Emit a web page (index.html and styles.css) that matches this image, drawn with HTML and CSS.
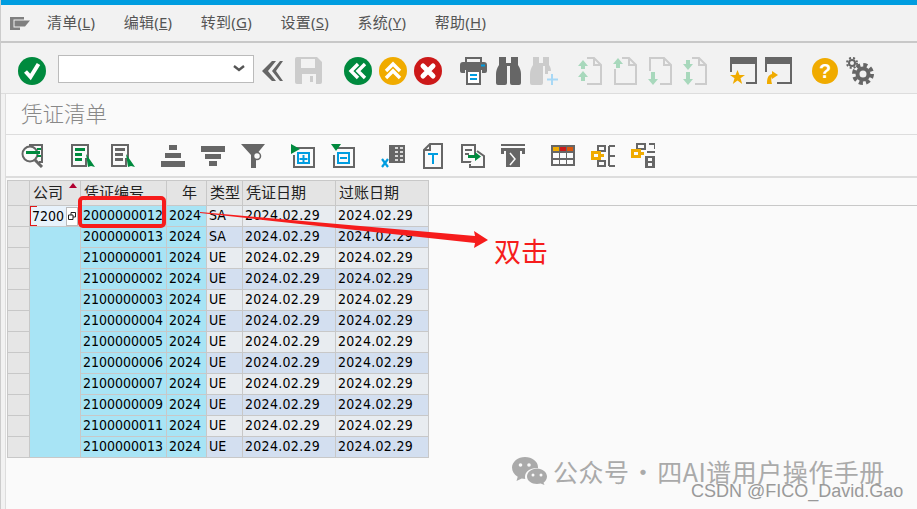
FILE: index.html
```html
<!DOCTYPE html>
<html lang="zh-CN">
<head>
    <meta charset="UTF-8">
    <title>凭证清单</title>
    <link rel="stylesheet" href="styles.css">
</head>
<body>
    <div class="topbar"></div>

    <!-- Menu -->
    <div class="menubar">
        <svg class="menu-icon" width="20" height="13" viewBox="0 0 20 13"><path d="M0 0h14v2.500H3.500v8H10V13H0z" fill="#808080"/><path d="M4.500 3.500H20l-5 6H4.500z" fill="#808080"/></svg>
        <span class="menu-item">清单(<u>L</u>)</span>
        <span class="menu-item">编辑(<u>E</u>)</span>
        <span class="menu-item">转到(<u>G</u>)</span>
        <span class="menu-item">设置(<u>S</u>)</span>
        <span class="menu-item">系统(<u>Y</u>)</span>
        <span class="menu-item">帮助(<u>H</u>)</span>
    </div>

    <!-- System toolbar -->
    <div class="systembar">
        <div class="group">
            <span class="tool"><svg width="28" height="28" viewBox="0 0 28 28"><circle cx="14" cy="14" r="14" fill="#008a3e"/><path d="M7.500 14.500l5 5.500 8-13" fill="none" stroke="#fff" stroke-width="4"/></svg></span>
        </div>
        <div class="combo"><svg width="12" height="7" viewBox="0 0 12 7"><path d="M1 1l5 4 5-4" fill="none" stroke="#555" stroke-width="2.400"/></svg></div>
        <div class="group group-tight">
            <span class="tool"><svg width="24" height="22" viewBox="2 0 24 22"><path d="M12 1L2 11l10 10h4L8 11l8-10zM20 1l-8 10 8 10h3l-7-10 7-10z" fill="#666"/></svg></span>
            <span class="tool"><svg width="27" height="27" viewBox="0 0 27 27"><path d="M2 0h20l5 5v20a2 2 0 0 1-2 2H2a2 2 0 0 1-2-2V2a2 2 0 0 1 2-2z" fill="#ccc"/><path d="M6 2h14v9H6z" fill="#f2f2f2"/><path d="M7 17h14v10H7z" fill="#f2f2f2"/><path d="M15 19h3v6h-3z" fill="#ccc"/></svg></span>
        </div>
        <div class="group group-wide">
            <span class="tool"><svg width="28" height="28" viewBox="0 0 28 28"><circle cx="14" cy="14" r="14" fill="#008a3e"/><path d="M14 7l-7 7 7 7M21 7l-7 7 7 7" fill="none" stroke="#fff" stroke-width="3.400"/></svg></span>
            <span class="tool"><svg width="28" height="28" viewBox="0 0 28 28"><circle cx="14" cy="14" r="14" fill="#f0ab00"/><path d="M7 14l7-7 7 7M7 21l7-7 7 7" fill="none" stroke="#fff" stroke-width="3.400"/></svg></span>
            <span class="tool"><svg width="28" height="28" viewBox="0 0 28 28"><circle cx="14" cy="14" r="14" fill="#cc1919"/><path d="M9 9l10 10M19 9L9 19" fill="none" stroke="#fff" stroke-width="5" stroke-linecap="round"/></svg></span>
        </div>
        <div class="group">
            <span class="tool"><svg width="27" height="28" viewBox="0 0 27 28"><path d="M6 5V1h15v4" fill="none" stroke="#666" stroke-width="2"/><path d="M3 5h21a3 3 0 0 1 3 3v6a2 2 0 0 1-2 2h-3v-3H5v3H2a2 2 0 0 1-2-2V8a3 3 0 0 1 3-3z" fill="#666"/><path d="M21 7.500h4v2h-4z" fill="#009de0"/><path d="M7 14h13v13H7z" fill="#fff" stroke="#666" stroke-width="2"/><path d="M10 17h7v2h-7zM10 21h7v2h-7z" fill="#009de0"/></svg></span>
            <span class="tool"><svg width="25" height="28" viewBox="0 0 25 28"><path d="M3 0h7v6h5V0h7v8c2 3 3 6 3 9v9a2 2 0 0 1-2 2h-7a2 2 0 0 1-2-2V9h-3v17a2 2 0 0 1-2 2H2a2 2 0 0 1-2-2v-9c0-3 1-6 3-9z" fill="#666"/></svg></span>
            <span class="tool"><svg width="28" height="28" viewBox="0 0 28 28"><path d="M3 0h6v6h4V0h6v8c1.500 2 2 4 2 6h-3v3h-3V9h-2v17a2 2 0 0 1-2 2H2a2 2 0 0 1-2-2v-9c0-3 1-6 3-9z" fill="#ccc"/><path d="M22 17v11M17 22.500h11" stroke="#a8d8f5" stroke-width="2"/></svg></span>
        </div>
        <div class="group">
            <span class="tool"><svg width="24" height="28" viewBox="0 0 24 28"><path d="M9 1h7l7 7v19H9" fill="none" stroke="#ccc" stroke-width="2"/><path d="M16 1v7h7" fill="none" stroke="#ccc" stroke-width="2"/><path d="M5 3l5 6H7v3H3V9H0zM5 14l5 6H7v4H3v-4H0z" fill="#a8d8bc"/></svg></span>
            <span class="tool"><svg width="24" height="28" viewBox="0 0 24 28"><path d="M9 1h7l7 7v19H2V12" fill="none" stroke="#ccc" stroke-width="2"/><path d="M16 1v7h7" fill="none" stroke="#ccc" stroke-width="2"/><path d="M5 1l5 6H7v4H3V7H0z" fill="#a8d8bc"/></svg></span>
            <span class="tool"><svg width="24" height="28" viewBox="0 0 24 28"><path d="M2 14V1h14l7 7v19H12" fill="none" stroke="#ccc" stroke-width="2"/><path d="M16 1v7h7" fill="none" stroke="#ccc" stroke-width="2"/><path d="M3 15h4v7h3l-5 6-5-6h3z" fill="#a8d8bc"/></svg></span>
            <span class="tool"><svg width="24" height="28" viewBox="0 0 24 28"><path d="M9 1h7l7 7v19H12" fill="none" stroke="#ccc" stroke-width="2"/><path d="M16 1v7h7" fill="none" stroke="#ccc" stroke-width="2"/><path d="M3 3h4v4h3l-5 6-5-6h3zM3 15h4v7h3l-5 6-5-6h3z" fill="#a8d8bc"/></svg></span>
        </div>
        <div class="group group-wide">
            <span class="tool"><svg width="27" height="27" viewBox="0 0 27 27"><path d="M0 0h27v27H16v-2h9V7H2v8H0z" fill="#666"/><path d="M7.500 13l2 5h5.500l-4.500 3.300 1.700 5.700-4.700-3.500L2.800 27l1.700-5.700L0 18h5.500z" fill="#f0ab00"/></svg></span>
            <span class="tool"><svg width="27" height="27" viewBox="0 0 27 27"><path d="M0 0h27v27H12v-2h13V7H2v8H0z" fill="#666"/><path d="M2 27c0-6 1-9 5-10v-3l6 4-6 4v-2c-1 1-1 4 0 7z" fill="#f0ab00"/></svg></span>
        </div>
        <div class="group">
            <span class="tool"><svg width="26" height="26" viewBox="0 0 26 26"><circle cx="13" cy="13" r="13" fill="#f0ab00"/><text x="13" y="20" class="help-mark">?</text></svg></span>
            <span class="tool"><svg width="28" height="28" viewBox="0 0 28 28"><circle cx="6" cy="6" r="3" fill="none" stroke="#666" stroke-width="2"/><circle cx="6" cy="6" r="5" fill="none" stroke="#666" stroke-width="2" stroke-dasharray="2 2"/><circle cx="17" cy="17" r="5.500" fill="none" stroke="#666" stroke-width="4"/><circle cx="17" cy="17" r="9" fill="none" stroke="#666" stroke-width="4" stroke-dasharray="4 3.070"/></svg></span>
        </div>
    </div>

    <div class="content">
        <div class="title">凭证清单</div>

        <!-- Application toolbar -->
        <div class="appbar">
            <div class="group">
                <span class="tool-app"><svg width="24" height="24" viewBox="0 0 24 24"><path d="M8 1h13v17h-3" fill="none" stroke="#666" stroke-width="2"/><circle cx="9" cy="10" r="7.500" fill="#fafafa" stroke="#666" stroke-width="2"/><path d="M14 16l7 7" stroke="#666" stroke-width="3"/><path d="M5 7h14v3H5z" fill="#008a3e"/><path d="M16 11h4v2h-4zM16 4h4v2h-4z" fill="#008a3e"/></svg></span>
            </div>
            <div class="group">
                <span class="tool-app"><svg width="24" height="24" viewBox="0 0 24 24"><path d="M1 1h16v14h-2v7H1z" fill="#fafafa" stroke="#666" stroke-width="2"/><path d="M4 4h10v3H4zM4 9h7v3H4zM4 14h7v3H4z" fill="#008a3e"/><path d="M15 10l9 13-4-1-3 1z" fill="#008a3e"/></svg></span>
                <span class="tool-app"><svg width="24" height="24" viewBox="0 0 24 24"><path d="M1 1h16v14h-2v7H1z" fill="#fafafa" stroke="#666" stroke-width="2"/><path d="M4 4h10v3H4zM4 9h8v3H4zM4 14h8v3H4z" fill="#666"/><path d="M15 10l9 13-4-1-3 1z" fill="#008a3e"/></svg></span>
            </div>
            <div class="group">
                <span class="tool-app"><svg width="24" height="22" viewBox="0 0 24 22"><path d="M8 0h8v5H8zM4 8h16v5H4zM0 16h24v6H0z" fill="#666"/></svg></span>
                <span class="tool-app"><svg width="24" height="20" viewBox="0 0 24 20"><path d="M0 0h24v6H0zM4 8h16v5H4zM8 15h8v5H8z" fill="#666"/></svg></span>
                <span class="tool-app"><svg width="24" height="24" viewBox="0 0 24 24"><path d="M0 0h24l-9 11v13h-5V11z" fill="#666"/><circle cx="16" cy="12" r="3.500" fill="#fafafa" stroke="#666" stroke-width="1.500"/></svg></span>
            </div>
            <div class="group">
                <span class="tool-app"><svg width="24" height="24" viewBox="0 0 24 24"><path d="M4 4h19v19H3V11" fill="#fafafa" stroke="#666" stroke-width="2"/><path d="M7 9h11v10H7z" fill="none" stroke="#009de0" stroke-width="2"/><path d="M11.500 11h2v3h3v2h-3v3h-2v-3h-3v-2h3z" fill="#009de0"/><path d="M0 0l9 5-9 5z" fill="#008a3e"/></svg></span>
                <span class="tool-app"><svg width="24" height="24" viewBox="0 0 24 24"><path d="M4 4h19v19H3V11" fill="#fafafa" stroke="#666" stroke-width="2"/><path d="M7 9h11v10H7z" fill="none" stroke="#009de0" stroke-width="2"/><path d="M9 13h7v2H9z" fill="#009de0"/><path d="M0 0h10L5 7z" fill="#008a3e"/></svg></span>
            </div>
            <div class="group">
                <span class="tool-app"><svg width="24" height="24" viewBox="0 0 24 24"><path d="M8 1h16v18H8z" fill="#666"/><path d="M14 3h3v2h-3zM19 3h3v2h-3zM14 7h3v2h-3zM19 7h3v2h-3zM14 11h3v2h-3zM19 11h3v2h-3zM14 15h3v2h-3zM19 15h3v2h-3z" fill="#d8d8d8"/><path d="M1 15l6 8M7 15l-6 8" stroke="#009de0" stroke-width="2.200"/></svg></span>
                <span class="tool-app"><svg width="20" height="26" viewBox="0 0 20 26"><path d="M7 1h12v24H1V7zM7 1v6H1" fill="#fafafa" stroke="#666" stroke-width="2"/><path d="M5 10h10v2H11v9H9v-9H5z" fill="#009de0"/></svg></span>
                <span class="tool-app"><svg width="24" height="24" viewBox="0 0 24 24"><path d="M1 1h13v17H1z" fill="#fafafa" stroke="#666" stroke-width="2"/><path d="M4 5h7v2H4zM4 9h4v2H4z" fill="#666"/><path d="M16 7l7 5v11H9v-3" fill="#fafafa" stroke="#666" stroke-width="2"/><path d="M7 11h7V8l6 4.500-6 4.500v-3H7z" fill="#008a3e"/></svg></span>
                <span class="tool-app"><svg width="24" height="23" viewBox="0 0 24 23"><path d="M0 0h24v2H0zM0 4h24v6h-3V7H3v3H0z" fill="#666"/><path d="M5 7h14v16H5z" fill="#666"/><path d="M9 9l5 6-5 6" fill="none" stroke="#fafafa" stroke-width="1.500"/></svg></span>
            </div>
            <div class="group">
                <span class="tool-app"><svg width="24" height="21" viewBox="0 0 24 21"><path d="M0 0h24v21H0z" fill="#666"/><path d="M2 2h6v4H2z" fill="#f0ab00"/><path d="M9 2h6v4H9z" fill="#cc1919"/><path d="M16 2h6v4h-6z" fill="#d9560e"/><path d="M2 8h6v5H2zM9 8h6v5H9zM16 8h6v5h-6zM2 15h6v4H2zM9 15h6v4H9zM16 15h6v4h-6z" fill="#fafafa"/></svg></span>
                <span class="tool-app"><svg width="24" height="22" viewBox="0 0 24 22"><path d="M7 1h7v5H7zM18 1h6M18 1v20M18 11h6M18 21h6M7 16h7v5H7z" fill="none" stroke="#666" stroke-width="2"/><path d="M0 6h10v3h3v3h-3v3H0z" fill="#f0ab00"/><path d="M3 9h4v3H3z" fill="#fafafa"/></svg></span>
                <span class="tool-app"><svg width="24" height="25" viewBox="0 0 24 25"><path d="M6 1h8v5H6zM18 1h6v5M16 9h8" fill="none" stroke="#666" stroke-width="2"/><path d="M14 13h10v12H14z" fill="#666"/><path d="M17 15h4v3h-4zM17 20h4v3h-4z" fill="#fafafa"/><path d="M0 6h10v3h3v3h-3v3H0z" fill="#f0ab00"/><path d="M3 9h4v3H3z" fill="#fafafa"/></svg></span>
            </div>
        </div>

        <!-- Document list -->
        <table class="grid">
            <colgroup>
                <col class="col-select"><col class="col-company"><col class="col-doc"><col class="col-year"><col class="col-type"><col class="col-date"><col class="col-date"><col>
            </colgroup>
            <tr>
                <th></th>
                <th class="sorted">公司</th>
                <th>凭证编号</th>
                <th class="year-head">年</th>
                <th>类型</th>
                <th>凭证日期</th>
                <th>过账日期</th>
                <th class="rest"></th>
            </tr>
            <tr>
                <td class="select"></td>
                <td class="focus"><div class="focus-inner">7200<span class="f4"><svg width="8" height="8" viewBox="0 0 8 8"><path d="M.5 3h4.500v4.500H.5zM3 3V.5h4.500V5H5" fill="none" stroke="#222"/></svg></span></div></td>
                <td class="key">2000000012</td><td class="key">2024</td><td>SA</td><td>2024.02.29</td><td>2024.02.29</td>
            </tr>
            <tr class="alt">
                <td class="select"></td>
                <td class="key" rowspan="11"></td>
                <td class="key">2000000013</td><td class="key">2024</td><td>SA</td><td>2024.02.29</td><td>2024.02.29</td>
            </tr>
            <tr><td class="select"></td><td class="key">2100000001</td><td class="key">2024</td><td>UE</td><td>2024.02.29</td><td>2024.02.29</td></tr>
            <tr class="alt"><td class="select"></td><td class="key">2100000002</td><td class="key">2024</td><td>UE</td><td>2024.02.29</td><td>2024.02.29</td></tr>
            <tr><td class="select"></td><td class="key">2100000003</td><td class="key">2024</td><td>UE</td><td>2024.02.29</td><td>2024.02.29</td></tr>
            <tr class="alt"><td class="select"></td><td class="key">2100000004</td><td class="key">2024</td><td>UE</td><td>2024.02.29</td><td>2024.02.29</td></tr>
            <tr><td class="select"></td><td class="key">2100000005</td><td class="key">2024</td><td>UE</td><td>2024.02.29</td><td>2024.02.29</td></tr>
            <tr class="alt"><td class="select"></td><td class="key">2100000006</td><td class="key">2024</td><td>UE</td><td>2024.02.29</td><td>2024.02.29</td></tr>
            <tr><td class="select"></td><td class="key">2100000007</td><td class="key">2024</td><td>UE</td><td>2024.02.29</td><td>2024.02.29</td></tr>
            <tr class="alt"><td class="select"></td><td class="key">2100000009</td><td class="key">2024</td><td>UE</td><td>2024.02.29</td><td>2024.02.29</td></tr>
            <tr><td class="select"></td><td class="key">2100000011</td><td class="key">2024</td><td>UE</td><td>2024.02.29</td><td>2024.02.29</td></tr>
            <tr class="alt"><td class="select"></td><td class="key">2100000013</td><td class="key">2024</td><td>UE</td><td>2024.02.29</td><td>2024.02.29</td></tr>
        </table>
    </div>

    <!-- Annotation drawn over the screenshot -->
    <svg class="markup" width="917" height="509" viewBox="0 0 917 509">
        <rect x="80" y="198" width="84" height="28" rx="3" fill="none" stroke="#f61c1c" stroke-width="4"/>
        <path d="M200 212L475 236l-1-5 14 9-14 8 1-5L200 213z" fill="#f61c1c"/>
    </svg>
    <div class="note">双击</div>

    <!-- Watermarks -->
    <div class="watermark">
        <svg width="35" height="28" viewBox="0 0 35 28"><path d="M13 0c7 0 13 4.500 13 10 0 .5 0 1-.1 1.200C19 10.500 13 14.500 13 20c0 .8.100 1.300.3 2-1.300 0-2.500-.2-3.600-.5L4.500 24l1.200-4.200C2.200 17.800 0 14.300 0 10.500 0 4.700 6 0 13 0z" fill="#aaa"/><path d="M25 11.500c5.500 0 10 3.700 10 8 0 2.500-1.500 4.700-3.500 6.200l1 2.300-3.800-1.500c-1.200.3-2.500.5-3.700.5-5.500 0-10-3.300-10-7.500s4.500-8 10-8z" fill="#aaa"/><circle cx="8.500" cy="8" r="1.800" fill="#fafafa"/><circle cx="17" cy="8" r="1.800" fill="#fafafa"/><circle cx="21" cy="18" r="1.500" fill="#fafafa"/><circle cx="29" cy="18" r="1.500" fill="#fafafa"/></svg>
        <span>公众号 · 四AI谱用户操作手册</span>
    </div>
    <div class="csdn">CSDN @FICO_David.Gao</div>
</body>
</html>
```

FILE: styles.css
```css
body {
    font-family: "DejaVu Sans Condensed", "Noto Sans", "Noto Sans CJK SC", sans-serif;
    margin: 0;
    padding: 0;
    width: 917px;
    height: 509px;
    overflow: hidden;
    position: relative;
    background: #f2f2f2;
    border-left: 1px solid #ccc;
    box-sizing: border-box;
}

.topbar {
    height: 5px;
    margin-left: -1px;
    background: #009de0;
}

/* Menu */
.menubar {
    height: 36px;
    display: flex;
    align-items: center;
    padding-left: 9px;
    background: #f2f2f2;
    border-bottom: 2px solid #c8c8c8;
    font-family: "Noto Sans", "Noto Sans CJK SC", sans-serif;
    font-size: 15px;
    letter-spacing: .25px;
    color: #555;
}

.menu-icon {
    margin-right: 17px;
}

.menu-item {
    margin: 0 28.500px 3px 0;
    white-space: nowrap;
}

/* Toolbars */
.systembar {
    height: 51px;
    box-sizing: border-box;
    display: flex;
    align-items: center;
    padding: 5px 0 0 13px;
    background: #f2f2f2;
    border-bottom: 1px solid #ddd;
}

.group {
    display: flex;
    align-items: center;
    margin-left: 11px;
}

.systembar .group:first-child {
    margin-left: 0;
}

.group-tight {
    margin-left: 2px;
}

.group-wide {
    margin-left: 14px;
}

.tool,
.tool-app {
    display: flex;
    justify-content: center;
    align-items: center;
    flex: none;
}

.tool {
    width: 35px;
}

.tool-app {
    width: 40px;
}

.help-mark {
    font-family: "Liberation Sans", sans-serif;
    font-size: 20px;
    font-weight: bold;
    fill: #fff;
    text-anchor: middle;
}

.combo {
    width: 196px;
    height: 28px;
    margin: 0 0 4px 9px;
    box-sizing: border-box;
    display: flex;
    align-items: center;
    justify-content: flex-end;
    padding-right: 8px;
    background: #fff;
    border: 1px solid #bbb;
}

.content {
    height: 415px;
    margin-left: 4px;
    border-left: 1px solid #ddd;
    background: #fafafa;
}

.title {
    height: 40px;
    line-height: 38px;
    padding-left: 15px;
    font-family: "Noto Sans CJK SC", sans-serif;
    font-size: 21.500px;
    font-weight: 300;
    color: #888;
}

.appbar {
    height: 41px;
    display: flex;
    align-items: center;
    padding-left: 7px;
    border-top: 1px solid #ddd;
    border-bottom: 2px solid #ddd;
    margin-bottom: 2px;
}

.appbar .group {
    margin-left: 10px;
}

.appbar .group:first-child {
    margin-left: 0;
}

/* Grid */
.grid {
    width: 911px;
    margin-left: 1px;
    table-layout: fixed;
    border-collapse: collapse;
    font-size: 14px;
    color: #000;
}

.col-select {
    width: 22px;
}

.col-company {
    width: 51px;
}

.col-doc {
    width: 86px;
}

.col-year {
    width: 40px;
}

.col-type {
    width: 36px;
}

.col-date {
    width: 93px;
}

.grid th,
.grid td {
    padding: 0 0 2px 2px;
    height: 21px;
    box-sizing: border-box;
    border: 1px solid #c8c8c8;
    background: #e8ecf0;
    white-space: nowrap;
    text-align: left;
    font-weight: normal;
    line-height: 18px;
}

.grid td:nth-last-child(-n+2) {
    letter-spacing: .3px;
}

.grid th {
    height: 25px;
    background: #e4e4e4;
    color: #222;
    padding: 0 0 3px 3px;
    font-family: "Noto Sans CJK SC", sans-serif;
    font-size: 15px;
}

.grid th.rest {
    background: transparent;
    border-top: 0;
    border-right: 0;
}

.grid th.year-head {
    text-align: right;
    padding-right: 9px;
}

.grid th.sorted {
    position: relative;
}

.grid th.sorted::after {
    content: "";
    position: absolute;
    top: 2px;
    right: 3px;
    border-left: 4px solid transparent;
    border-right: 4px solid transparent;
    border-bottom: 5px solid #b00030;
}

.grid td.select,
.grid tr.alt td.select {
    background: #e6e6e6;
}

.grid tr.alt td {
    background: #d3dff0;
}

.grid td.key,
.grid tr.alt td.key {
    background: #a8e4f5;
}

.grid td.focus {
    padding: 0;
    background: #e8f2fb;
    position: relative;
}

.focus-inner {
    display: flex;
    align-items: center;
    justify-content: space-between;
    padding: 0 2px;
}

.focus-inner::before {
    content: "";
    position: absolute;
    left: 0;
    top: 0;
    bottom: 0;
    width: 6px;
    border: 1px solid #e01818;
    border-right: 0;
}

.f4 {
    width: 12px;
    height: 19px;
    box-sizing: border-box;
    display: flex;
    align-items: center;
    justify-content: center;
    background: #fff;
    border: 1px solid #bbb;
}

/* Annotation */
.markup {
    position: absolute;
    left: -1px;
    top: 0;
    pointer-events: none;
}

.note {
    position: absolute;
    left: 493px;
    top: 233px;
    font-family: "Noto Sans CJK SC", sans-serif;
    font-size: 27px;
    line-height: 36px;
    color: #f61c1c;
}

.watermark {
    position: absolute;
    left: 511px;
    top: 457px;
    display: flex;
    align-items: center;
    gap: 6px;
    font-family: "Noto Sans CJK SC", sans-serif;
    font-size: 25px;
    line-height: 28px;
    letter-spacing: .5px;
    word-spacing: -5px;
    color: #aaa;
    white-space: nowrap;
}

.csdn {
    position: absolute;
    left: 690px;
    top: 481px;
    font-family: "Liberation Sans", sans-serif;
    font-size: 18px;
    line-height: 20px;
    color: #999;
    white-space: nowrap;
}
```
